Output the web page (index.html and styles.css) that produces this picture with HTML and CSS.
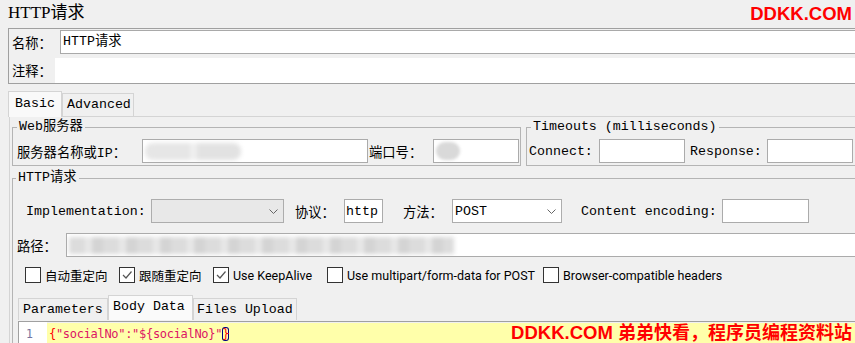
FILE: index.html
```html
<!DOCTYPE html>
<html>

<head>
  <title>HTTP请求</title>
  <link rel="stylesheet" href="styles.css">
</head>

<body>
  <div class="page">
    <div class="top">
      <div class="title">HTTP请求</div>
      <div class="brand">DDKK.COM</div>
    </div>

    <div class="namebox">
      <div class="namerow">
        <span class="nlabel">名称：</span>
        <div class="namefield">HTTP请求</div>
      </div>
      <div class="namerow note">
        <span class="nlabel">注释：</span>
        <div class="namefield plain"></div>
      </div>
    </div>

    <div class="tabs">
      <div class="tab active basic">Basic</div>
      <div class="tab adv">Advanced</div>
    </div>

    <div class="panel">
      <div class="serverrow">
        <fieldset class="group web">
          <legend>Web服务器</legend>
          <div class="row">
            <span class="lab lab-host">服务器名称或IP：</span>
            <div class="field f-host"><span class="blur b-host"></span></div>
            <span class="lab lab-port">端口号：</span>
            <div class="field f-port"><span class="blur b-port"></span></div>
          </div>
        </fieldset>
        <fieldset class="group timeouts">
          <legend>Timeouts (milliseconds)</legend>
          <div class="row">
            <span class="lab lab-connect">Connect:</span>
            <div class="field f-num"></div>
            <span class="lab lab-resp">Response:</span>
            <div class="field f-num"></div>
          </div>
        </fieldset>
      </div>

      <fieldset class="group http">
        <legend>HTTP请求</legend>
        <div class="row">
          <span class="lab lab-impl">Implementation:</span>
          <div class="select disabled sel-impl">
            <span></span>
            <svg class="arrow" width="9" height="5" viewBox="0 0 9 5"><path d="M0.5 0.5 L4.5 4.5 L8.5 0.5" fill="none" stroke="#666" stroke-width="1"/></svg>
          </div>
          <span class="lab lab-proto">协议：</span>
          <div class="field f-http">http</div>
          <span class="lab lab-method">方法：</span>
          <div class="select sel-method">
            <span>POST</span>
            <svg class="arrow" width="9" height="5" viewBox="0 0 9 5"><path d="M0.5 0.5 L4.5 4.5 L8.5 0.5" fill="none" stroke="#666" stroke-width="1"/></svg>
          </div>
          <span class="lab lab-enc">Content encoding:</span>
          <div class="field f-enc"></div>
        </div>

        <div class="row path">
          <span class="lab lab-path">路径：</span>
          <div class="field f-path"><span class="blur b-path"></span></div>
        </div>

        <div class="checks">
          <label class="check c1"><span class="box"></span>自动重定向</label>
          <label class="check c2"><span class="box"><svg width="14" height="14" viewBox="0 0 14 14"><path d="M3 7 L6 10 L11.5 3.5" fill="none" stroke="#555" stroke-width="1.2"/></svg></span>跟随重定向</label>
          <label class="check c3"><span class="box"><svg width="14" height="14" viewBox="0 0 14 14"><path d="M3 7 L6 10 L11.5 3.5" fill="none" stroke="#555" stroke-width="1.2"/></svg></span>Use KeepAlive</label>
          <label class="check c4"><span class="box"></span>Use multipart/form-data for POST</label>
          <label class="check"><span class="box"></span>Browser-compatible headers</label>
        </div>

        <div class="subtabs">
          <div class="stab st-params">Parameters</div>
          <div class="stab active st-body">Body Data</div>
          <div class="stab st-files">Files Upload</div>
        </div>

        <div class="editor">
          <div class="gutter">1</div>
          <div class="code"><span class="brace">{</span><span class="str">"socialNo":"${socialNo}"</span><span class="brace match">}</span></div>
        </div>
      </fieldset>
    </div>

    <div class="watermark">DDKK.COM <span class="wm-cn">弟弟快看，程序员编程资料站</span></div>
  </div>
</body>
</html>
```

FILE: styles.css
```css
body {
  margin: 0;
  background: #f0f0f0;
  font-family: "Liberation Mono", "Noto Sans CJK SC", monospace;
  font-size: 13.3px;
  color: #000;
}

.page {
  position: relative;
  width: 855px;
  height: 343px;
  overflow: hidden;
}

/* header */
.top {
  display: flex;
  justify-content: space-between;
  height: 28px;
}

.title {
  padding-left: 8px;
  font-family: "Liberation Serif", "Noto Sans CJK SC", serif;
  font-size: 17px;
  line-height: 26px;
}

.brand {
  padding-right: 3px;
  color: #f00;
  font: bold 18.5px/28px "Liberation Sans", "Noto Sans CJK SC", sans-serif;
}

/* name / comment */
.namebox {
  margin: 0 -10px 0 8px;
  border: 1px solid #a0a0a0;
  padding-top: 1px;
}

.namerow {
  display: flex;
  align-items: center;
  height: 24px;
}

.namerow.note {
  height: 25px;
  margin-top: 4px;
}

.nlabel {
  box-sizing: border-box;
  width: 51px;
  padding-left: 3px;
  flex: none;
}

.note .nlabel {
  width: 46px;
}

.namefield {
  flex: 1;
  box-sizing: border-box;
  height: 24px;
  line-height: 22px;
  padding-left: 2px;
  border: 1px solid #a9a9a9;
  background: #fff;
}

.namefield.plain {
  height: 25px;
  border: none;
}

/* top tabs */
.tabs {
  display: flex;
  align-items: flex-end;
  height: 25px;
  margin-top: 7px;
  padding-left: 8px;
}

.tab {
  box-sizing: border-box;
  height: 23px;
  border: 1px solid #d4d4d4;
  border-bottom: none;
  line-height: 22px;
}

.tab.active {
  position: relative;
  height: 26px;
  margin-bottom: -1px;
  background: #f9f9f9;
  line-height: 23px;
}

.basic {
  width: 54px;
  padding-left: 6px;
}

.adv {
  width: 72px;
  padding-left: 4px;
}

.panel {
  margin: 0 -6px 0 9px;
  border-top: 1px solid #d4d4d4;
  border-left: 1px solid #d4d4d4;
  padding: 2px 0 0 2px;
}

/* group boxes */
.serverrow {
  display: flex;
  gap: 5px;
}

fieldset.group {
  box-sizing: border-box;
  min-width: 0;
  margin: 0;
  padding: 4px 1px 2px 4px;
  border: 1px solid #b4b4b4;
}

legend {
  padding: 0 2px;
  line-height: 16px;
}

.web {
  flex: none;
  width: 509px;
}

.timeouts {
  flex: 1;
}

fieldset.timeouts {
  padding-left: 2px;
}

.timeouts legend {
  margin-left: 2px;
}

fieldset.http {
  margin-top: 4px;
  padding: 13px 0 0 4px;
  border-right: none;
}

.http legend {
  margin-left: -1px;
}

.row {
  display: flex;
  align-items: center;
  height: 24px;
}

.row.path {
  margin-top: 10px;
}

.lab {
  flex: none;
  box-sizing: border-box;
  white-space: nowrap;
}

.lab-host { width: 125px; }
.lab-port { width: 65px; padding-left: 1px; }
.lab-connect { width: 70px; }
.lab-resp { width: 77px; margin-left: 5px; }
.lab-impl { width: 125px; margin-left: 9px; }
.lab-proto { width: 49px; margin-left: 11px; }
.lab-method { width: 49px; margin-left: 20px; }
.lab-enc { width: 141px; margin-left: 19px; }
.lab-path { width: 49px; }

.field {
  flex: none;
  display: flex;
  align-items: center;
  box-sizing: border-box;
  height: 24px;
  padding: 0 2px;
  border: 1px solid #ababab;
  background: #fff;
  overflow: hidden;
}

.f-host { width: 226px; }
.f-port { width: 86px; }
.f-num { width: 86px; }
.f-http { width: 39px; padding-left: 1px; }
.f-enc { width: 87px; }
.f-path { flex: 1; }

.blur {
  display: block;
  flex: none;
}

.b-host {
  width: 96px;
  height: 17px;
  border-radius: 8px;
  background: linear-gradient(90deg, #e6e6e6 0 45px, #efefef 45px 52px, #e2e2e2 52px);
  filter: blur(2px);
}

.b-port {
  width: 24px;
  height: 18px;
  border-radius: 9px;
  background: #d9d9d9;
  filter: blur(1.5px);
}

.b-path {
  width: 385px;
  height: 17px;
  background: repeating-linear-gradient(90deg, #dcdcdc 0 16px, #e8e8e8 16px 23px, #d4d4d4 23px 34px);
  filter: blur(2px);
}

.select {
  flex: none;
  display: flex;
  align-items: center;
  justify-content: space-between;
  box-sizing: border-box;
  height: 24px;
  padding: 0 5px 0 2px;
  border: 1px solid #adadad;
  background: #fff;
}

.select.disabled {
  background: #e8e8e8;
}

.sel-impl { width: 133px; }
.sel-method { width: 110px; }

/* check boxes */
.checks {
  display: flex;
  align-items: center;
  height: 16px;
  margin-top: 10px;
  padding-left: 8px;
  font-family: Roboto, "Noto Sans CJK SC", sans-serif;
  font-size: 12.5px;
}

.check {
  flex: none;
  display: flex;
  align-items: center;
  gap: 4px;
  white-space: nowrap;
}

.c1, .c2 { width: 94px; }
.c3 { width: 114px; }
.c4 { width: 216px; }

.box {
  flex: none;
  display: flex;
  align-items: center;
  justify-content: center;
  box-sizing: border-box;
  width: 16px;
  height: 16px;
  border: 1px solid #333;
  background: #fff;
}

/* body tabs + editor */
.subtabs {
  display: flex;
  align-items: flex-end;
  height: 25px;
  margin: 12px 0 0 1px;
}

.stab {
  box-sizing: border-box;
  height: 22px;
  border: 1px solid #d4d4d4;
  border-bottom: none;
  padding-left: 4px;
  line-height: 21px;
}

.stab.active {
  height: 25px;
  background: #fafafa;
  line-height: 22px;
}

.st-params { width: 90px; }
.st-body { width: 85px; }
.st-files { width: 104px; padding-left: 3px; }

.editor {
  display: flex;
  height: 40px;
  margin: 1px 0 0 1px;
  border-top: 1px solid #a0a0a0;
  border-left: 1px solid #a0a0a0;
  font-family: "DejaVu Sans Mono", monospace;
  font-size: 12px;
}

.gutter {
  flex: none;
  box-sizing: border-box;
  width: 28px;
  padding: 1px 14px 0 0;
  background: #fff;
  color: #7474a0;
  font-size: 11.5px;
  line-height: 22px;
  text-align: right;
}

.code {
  flex: 1;
  height: 22px;
  margin-top: 1px;
  padding-left: 2px;
  background: #ffffaa;
  line-height: 22px;
  letter-spacing: -0.3px;
  white-space: pre;
}

.brace {
  color: #f00;
}

.str {
  color: #dc1464;
}

.match {
  display: inline-block;
  line-height: 14px;
  border-radius: 3px;
  box-shadow: inset 0 0 0 1px #000080;
}

.watermark {
  position: absolute;
  top: 319px;
  right: 3px;
  color: #f00;
  font: bold 18.5px/28px "Liberation Sans", "Noto Sans CJK SC", sans-serif;
  white-space: nowrap;
}

.wm-cn {
  font-size: 18px;
}
```
